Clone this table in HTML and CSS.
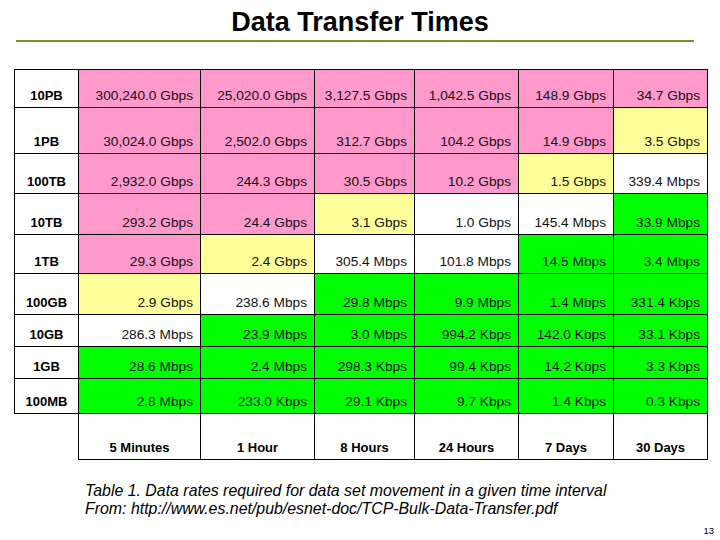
FILE: index.html
```html
<!DOCTYPE html>
<html lang="en">
<head>
<meta charset="utf-8">
<title>Data Transfer Times</title>
<link rel="stylesheet" href="styles.css">
</head>
<body>
<div class="slide">
  <h1 class="title">Data Transfer Times</h1>
  <div class="rule"></div>
  <table class="rates">
    <colgroup>
      <col class="c-label"><col class="c1"><col class="c2"><col class="c3"><col class="c4"><col class="c5"><col class="c6">
    </colgroup>
    <tbody>
      <tr class="r1"><th>10PB</th><td class="p">300,240.0 Gbps</td><td class="p">25,020.0 Gbps</td><td class="p">3,127.5 Gbps</td><td class="p">1,042.5 Gbps</td><td class="p">148.9 Gbps</td><td class="p">34.7 Gbps</td></tr>
      <tr class="r2"><th>1PB</th><td class="p">30,024.0 Gbps</td><td class="p">2,502.0 Gbps</td><td class="p">312.7 Gbps</td><td class="p">104.2 Gbps</td><td class="p">14.9 Gbps</td><td class="y">3.5 Gbps</td></tr>
      <tr class="r3"><th>100TB</th><td class="p">2,932.0 Gbps</td><td class="p">244.3 Gbps</td><td class="p">30.5 Gbps</td><td class="p">10.2 Gbps</td><td class="y">1.5 Gbps</td><td class="w">339.4 Mbps</td></tr>
      <tr class="r4"><th>10TB</th><td class="p">293.2 Gbps</td><td class="p">24.4 Gbps</td><td class="y">3.1 Gbps</td><td class="w">1.0 Gbps</td><td class="w">145.4 Mbps</td><td class="g">33.9 Mbps</td></tr>
      <tr class="r5"><th>1TB</th><td class="p">29.3 Gbps</td><td class="y">2.4 Gbps</td><td class="w">305.4 Mbps</td><td class="w">101.8 Mbps</td><td class="g">14.5 Mbps</td><td class="g">3.4 Mbps</td></tr>
      <tr class="r6"><th>100GB</th><td class="y">2.9 Gbps</td><td class="w">238.6 Mbps</td><td class="g">29.8 Mbps</td><td class="g">9.9 Mbps</td><td class="g">1.4 Mbps</td><td class="g">331.4 Kbps</td></tr>
      <tr class="r7"><th>10GB</th><td class="w">286.3 Mbps</td><td class="g">23.9 Mbps</td><td class="g">3.0 Mbps</td><td class="g">994.2 Kbps</td><td class="g">142.0 Kbps</td><td class="g">33.1 Kbps</td></tr>
      <tr class="r8"><th>1GB</th><td class="g">28.6 Mbps</td><td class="g">2.4 Mbps</td><td class="g">298.3 Kbps</td><td class="g">99.4 Kbps</td><td class="g">14.2 Kbps</td><td class="g">3.3 Kbps</td></tr>
      <tr class="r9"><th>100MB</th><td class="g">2.8 Mbps</td><td class="g">233.0 Kbps</td><td class="g">29.1 Kbps</td><td class="g">9.7 Kbps</td><td class="g">1.4 Kbps</td><td class="g">0.3 Kbps</td></tr>
      <tr class="r10 foot"><td class="blank"></td><th>5 Minutes</th><th>1 Hour</th><th>8 Hours</th><th>24 Hours</th><th>7 Days</th><th>30 Days</th></tr>
    </tbody>
  </table>
  <p class="caption">Table 1. Data rates required for data set movement in a given time interval<br>From: http://www.es.net/pub/esnet-doc/TCP-Bulk-Data-Transfer.pdf</p>
  <div class="page-num">13</div>
</div>
</body>
</html>
```

FILE: styles.css
```css
html, body {
  margin: 0;
  padding: 0;
  background: #ffffff;
}
body {
  width: 720px;
  height: 540px;
  overflow: hidden;
  font-family: "Liberation Sans", Arial, sans-serif;
  color: #000;
}
.slide {
  width: 720px;
}
.title {
  margin: 0;
  padding-top: 7px;
  font-size: 27px;
  line-height: 31px;
  font-weight: bold;
  text-align: center;
}
.rule {
  margin: 2px 26px 0 16px;
  height: 2px;
  background: #77922f;
}
.rates {
  margin: 27px 0 0 14px;
  border-collapse: collapse;
  table-layout: fixed;
  width: 693px;
}
.c-label { width: 64px; }
.c1 { width: 122px; }
.c2 { width: 114px; }
.c3 { width: 100px; }
.c4 { width: 104px; }
.c5 { width: 95px; }
.c6 { width: 94px; }
.rates th,
.rates td {
  border: 1px solid #000;
  padding: 0 7px 4px 4px;
  vertical-align: bottom;
  font-size: 13.7px;
  line-height: 15px;
  white-space: nowrap;
}
.rates td {
  text-align: right;
  font-weight: normal;
  color: #111;
}
.rates th {
  text-align: center;
  font-weight: bold;
  font-size: 13px;
  padding: 0 2px 4px 2px;
  background: #fff;
}
.rates td.p { background: #ff99cc; }
.rates td.y { background: #ffff99; }
.rates td.w { background: #ffffff; }
.rates td.g { background: #00ff00; }
.rates td.blank {
  border-left: none;
  border-bottom: none;
  background: transparent;
}
.r1 { height: 38px; }
.r2 { height: 46px; }
.r3 { height: 40px; }
.r4 { height: 41px; }
.r5 { height: 39px; }
.r6 { height: 41px; }
.r7 { height: 32px; }
.r8 { height: 32px; }
.r9 { height: 35px; }
.r10 { height: 46px; }
.caption {
  margin: 22px 0 0 85px;
  font-size: 15.9px;
  line-height: 18px;
  font-style: italic;
  color: #000;
}
.page-num {
  margin-top: 7px;
  padding-right: 6px;
  text-align: right;
  font-size: 9.5px;
  line-height: 12px;
}
```
